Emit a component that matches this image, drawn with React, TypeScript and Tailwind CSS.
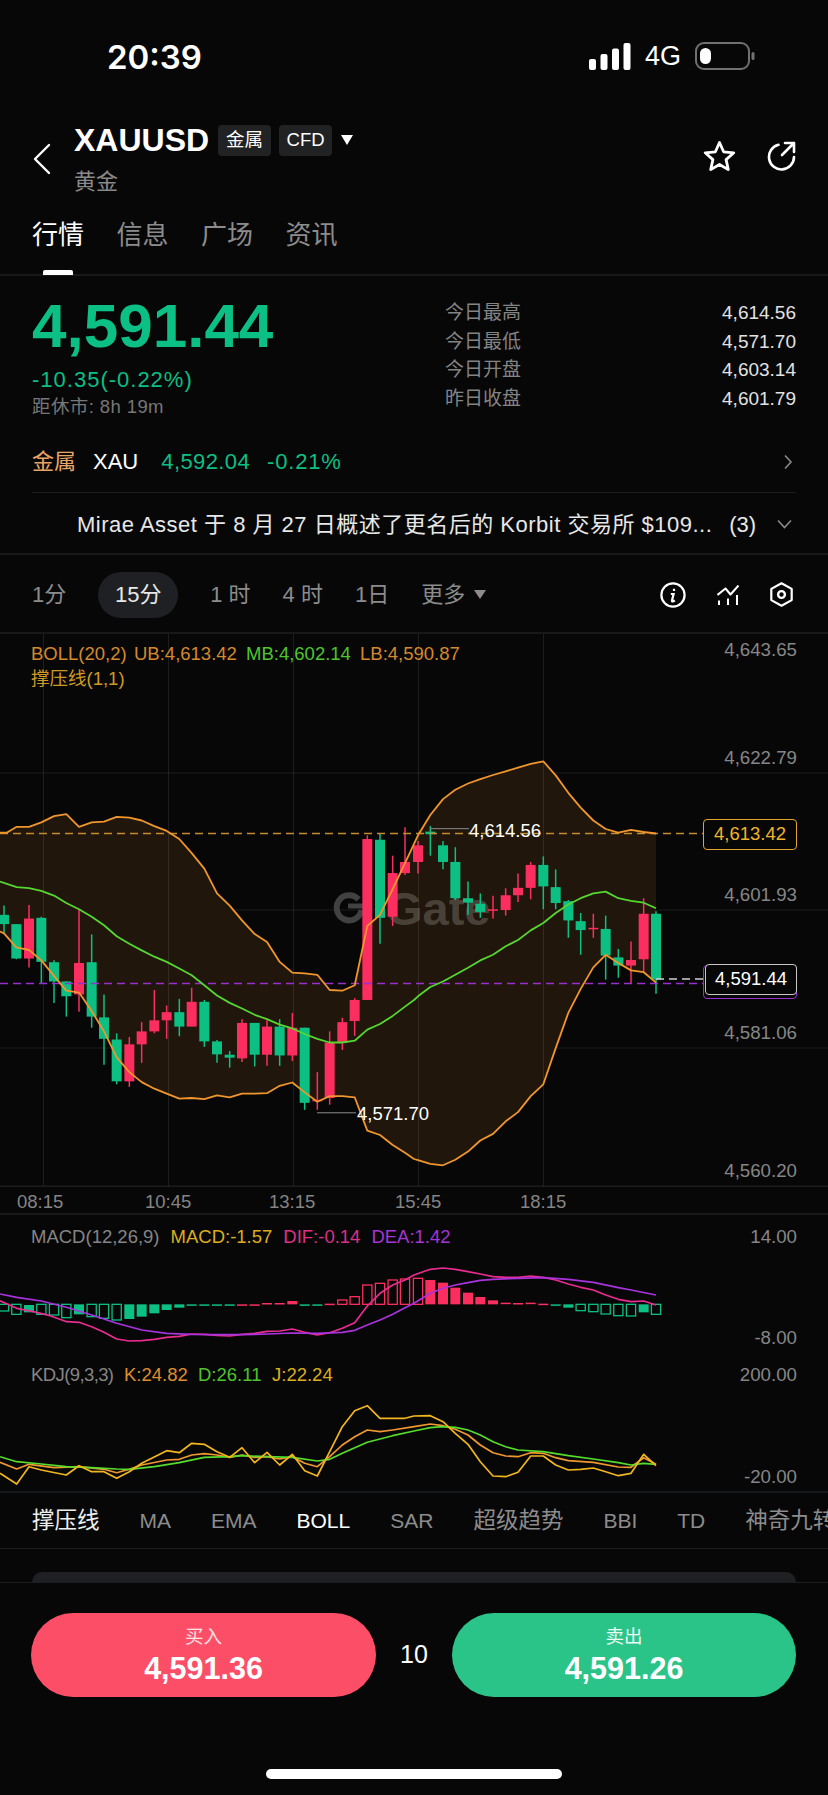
import React from 'react';

type P = [number, number];
// [x, wickTop, bodyTop, bodyBottom, wickBottom, up?]
type Candle = [number, number, number, number, number, number];

const RED = '#fb2e5f';
const GREEN = '#0cc084';
const R = 1242;

const join = (left: P[], right: P[]): P[] => [...left, ...right.map(([x, y]) => [x + R, y] as P)];

const upper = join(
  [[0, 548], [20, 548], [50, 532], [87, 532], [124, 520], [162, 503], [199, 498], [237, 532], [275, 520], [312, 518], [350, 505], [388, 507], [425, 515], [463, 530], [500, 543], [538, 565], [575, 603], [613, 645], [651, 712], [689, 745], [726, 785], [764, 822], [801, 843], [839, 897], [877, 926], [914, 928], [952, 932], [989, 973], [1027, 975], [1064, 960], [1102, 800], [1140, 770], [1178, 700], [1215, 630]],
  [[0, 578], [12, 555], [49, 500], [87, 457], [124, 432], [162, 415], [199, 403], [237, 392], [275, 382], [312, 372], [350, 362], [388, 355], [425, 393], [463, 440], [500, 480], [538, 515], [575, 538], [613, 548], [651, 540], [689, 546], [726, 550]],
);
const middle = join(
  [[0, 680], [50, 695], [87, 698], [124, 705], [162, 718], [199, 738], [237, 755], [275, 775], [312, 798], [350, 828], [388, 848], [425, 866], [463, 883], [500, 897], [538, 915], [575, 933], [613, 960], [651, 988], [689, 1008], [726, 1023], [764, 1040], [801, 1052], [839, 1067], [877, 1077], [914, 1092], [952, 1105], [989, 1115], [1027, 1115], [1064, 1110], [1102, 1080], [1140, 1065], [1178, 1043], [1215, 1018]],
  [[0, 1000], [12, 990], [49, 965], [87, 950], [124, 932], [162, 913], [199, 893], [237, 878], [275, 855], [312, 838], [350, 812], [388, 792], [425, 765], [463, 742], [500, 725], [538, 712], [575, 707], [613, 725], [651, 732], [689, 737], [726, 752]],
);
const lower = join(
  [[0, 815], [12, 820], [49, 858], [87, 865], [124, 893], [162, 935], [199, 975], [237, 980], [275, 1030], [312, 1085], [350, 1155], [388, 1195], [425, 1222], [463, 1240], [500, 1253], [538, 1267], [575, 1265], [613, 1268], [651, 1258], [689, 1263], [726, 1253], [764, 1253], [801, 1252], [839, 1232], [877, 1223], [914, 1250], [952, 1275], [989, 1260], [1027, 1260], [1064, 1263], [1102, 1353], [1140, 1365], [1178, 1392], [1215, 1413]],
  [[0, 1430], [12, 1433], [49, 1443], [87, 1447], [124, 1432], [162, 1410], [199, 1380], [237, 1362], [275, 1328], [312, 1303], [350, 1260], [388, 1228], [425, 1130], [463, 1035], [500, 970], [538, 912], [575, 878], [613, 900], [651, 920], [689, 925], [726, 953]],
);

const candles: Candle[] = [
  [12, 745, 770, 795, 820, 0], [49, 795, 795, 888, 890, 0], [87, 743, 780, 888, 912, 1], [124, 775, 778, 897, 955, 0],
  [162, 893, 898, 950, 1008, 0], [199, 950, 950, 990, 1045, 0], [237, 755, 900, 985, 1032, 1], [275, 823, 898, 1045, 1075, 0],
  [312, 985, 1047, 1105, 1175, 0], [350, 1090, 1107, 1220, 1228, 0], [388, 1100, 1120, 1220, 1235, 1], [425, 1060, 1085, 1120, 1170, 1],
  [463, 973, 1055, 1085, 1090, 1], [500, 1015, 1033, 1055, 1105, 1], [538, 997, 1033, 1072, 1098, 0], [575, 967, 1005, 1072, 1072, 1],
  [613, 1000, 1005, 1112, 1127, 0], [651, 1108, 1112, 1147, 1170, 0], [689, 1138, 1148, 1156, 1183, 0], [726, 1052, 1062, 1158, 1168, 1],
  [764, 1062, 1062, 1148, 1180, 0], [801, 1055, 1072, 1148, 1178, 1], [839, 1052, 1072, 1150, 1178, 0], [877, 1035, 1075, 1150, 1165, 1],
  [914, 1075, 1075, 1278, 1297, 0], [952, 1195, 1270, 1274, 1297, 1], [989, 1085, 1115, 1265, 1283, 1], [1027, 1048, 1060, 1115, 1135, 1],
  [1064, 995, 1000, 1057, 1097, 1], [1102, 555, 565, 1000, 1000, 1], [1140, 550, 567, 778, 848, 0], [1178, 610, 657, 775, 800, 1],
  [1215, 533, 627, 657, 662, 1], [1254, 570, 582, 627, 658, 1], [1291, 530, 545, 552, 610, 0], [1329, 570, 582, 627, 647, 0],
  [1366, 587, 627, 725, 730, 0], [1404, 680, 725, 737, 770, 0], [1441, 712, 740, 762, 778, 0], [1479, 718, 755, 758, 780, 1],
  [1517, 698, 717, 757, 772, 1], [1554, 658, 697, 717, 735, 1], [1592, 627, 635, 697, 728, 1], [1630, 612, 635, 693, 755, 0],
  [1667, 647, 695, 738, 755, 0], [1705, 730, 733, 785, 832, 0], [1742, 765, 787, 811, 878, 0], [1780, 767, 805, 808, 832, 1],
  [1817, 772, 808, 880, 945, 0], [1855, 862, 885, 907, 940, 0], [1893, 842, 892, 907, 955, 1], [1931, 725, 767, 890, 925, 1],
  [1968, 760, 767, 945, 983, 0],
];

// [x, top, bottom, kind] kind: 0 solid green, 1 hollow green, 2 solid red, 3 hollow red
const macdBars: [number, number, number, number][] = [
  [12, 313, 333, 1], [49, 313, 343, 1], [87, 315, 337, 0], [124, 313, 343, 1], [162, 313, 345, 1], [199, 313, 353, 1], [237, 313, 343, 0], [275, 313, 350, 1],
  [312, 313, 355, 1], [350, 313, 360, 1], [388, 313, 357, 0], [425, 313, 350, 0], [463, 313, 340, 0], [500, 313, 330, 0], [538, 313, 323, 0], [575, 313, 317, 0],
  [613, 313, 317, 0], [651, 313, 317, 0], [689, 313, 317, 0], [726, 313, 317, 2], [764, 313, 317, 2], [801, 309, 313, 2], [839, 309, 313, 2], [877, 303, 313, 2],
  [914, 313, 317, 0], [952, 313, 317, 0], [989, 311, 315, 2], [1027, 300, 313, 3], [1064, 290, 313, 3], [1102, 255, 313, 3], [1140, 250, 313, 3], [1178, 240, 313, 3],
  [1215, 237, 313, 3], [1254, 235, 313, 3], [1291, 240, 313, 2], [1329, 248, 313, 2], [1366, 263, 313, 2], [1404, 278, 313, 2], [1441, 291, 313, 2], [1479, 301, 313, 2],
  [1517, 308, 312, 2], [1554, 309, 313, 2], [1592, 308, 312, 2], [1630, 311, 315, 2], [1667, 313, 317, 0], [1705, 313, 323, 0], [1742, 313, 332, 1], [1780, 313, 335, 1],
  [1817, 313, 342, 1], [1855, 313, 347, 1], [1893, 313, 348, 1], [1931, 313, 337, 0], [1968, 313, 343, 1],
];

const dif = join(
  [[0, 302], [50, 325], [100, 335], [150, 347], [200, 365], [237, 367], [275, 380], [312, 397], [350, 417], [388, 423], [425, 422], [463, 418], [500, 412], [538, 409], [575, 402], [613, 403], [651, 406], [689, 408], [726, 403], [764, 400], [801, 394], [839, 393], [877, 387], [914, 397], [952, 405], [989, 398], [1027, 385], [1064, 368], [1102, 318], [1140, 280], [1178, 255], [1215, 240]],
  [[0, 225], [49, 208], [87, 204], [124, 208], [162, 215], [199, 222], [237, 230], [275, 232], [312, 232], [350, 228], [388, 232], [425, 240], [463, 252], [500, 262], [538, 270], [575, 285], [613, 298], [651, 305], [689, 303], [726, 315]],
);
const dea = join(
  [[0, 282], [50, 292], [124, 303], [199, 322], [275, 345], [350, 370], [425, 390], [500, 400], [575, 403], [651, 404], [726, 404], [801, 402], [877, 399], [952, 400], [1027, 397], [1064, 391], [1102, 375], [1140, 360], [1178, 343], [1215, 323]],
  [[0, 310], [49, 280], [87, 265], [124, 255], [162, 248], [199, 241], [237, 238], [312, 235], [388, 233], [463, 238], [538, 247], [613, 263], [651, 270], [726, 285]],
);
const kdjD = join(
  [[0, 770], [50, 785], [124, 792], [199, 800], [275, 803], [350, 807], [388, 808], [463, 800], [538, 788], [613, 772], [689, 770], [726, 767], [801, 770], [877, 772], [952, 783], [989, 778], [1027, 760], [1102, 727], [1178, 707]],
  [[0, 693], [49, 683], [87, 680], [124, 682], [162, 690], [199, 705], [237, 725], [275, 740], [312, 750], [388, 755], [463, 767], [538, 777], [613, 788], [651, 795], [689, 790], [726, 793]],
);
const kdjK = join(
  [[0, 787], [50, 807], [87, 793], [162, 803], [237, 800], [312, 808], [350, 818], [388, 808], [425, 795], [500, 780], [538, 778], [575, 765], [613, 761], [651, 765], [689, 772], [726, 765], [764, 772], [801, 770], [839, 777], [877, 770], [914, 790], [952, 800], [989, 770], [1027, 735], [1064, 710], [1102, 690], [1140, 695], [1178, 690]],
  [[0, 680], [49, 672], [87, 677], [124, 688], [162, 705], [199, 735], [237, 758], [275, 768], [312, 770], [350, 758], [388, 760], [425, 773], [463, 782], [538, 787], [613, 801], [651, 802], [689, 773], [726, 793]],
);
const kdjJ = join(
  [[0, 820], [50, 852], [87, 800], [124, 810], [199, 825], [237, 797], [275, 815], [312, 815], [350, 835], [388, 815], [425, 790], [500, 752], [538, 758], [575, 730], [613, 733], [651, 755], [689, 772], [726, 743], [764, 788], [801, 757], [839, 795], [877, 763], [914, 812], [952, 828], [989, 755], [1027, 680], [1064, 632], [1102, 617], [1140, 655], [1178, 655], [1215, 655]],
  [[0, 648], [49, 647], [87, 665], [124, 700], [162, 733], [199, 785], [237, 828], [275, 830], [312, 817], [350, 768], [388, 768], [425, 795], [463, 810], [500, 808], [538, 804], [575, 815], [613, 827], [651, 820], [689, 763], [726, 797]],
);

// main chart: zoom crop coordinates to panel pixels
const mx = (x: number) => x / 3;
const my = (y: number) => 630 + y / 2.703 - 634;
const mainPts = (p: P[]) => p.map(([x, y]) => `${mx(x).toFixed(1)},${my(y).toFixed(1)}`).join(' ');
// lower panels
const sy = (y: number) => y / 3 - 15;
const subPts = (p: P[]) => p.map(([x, y]) => `${mx(x).toFixed(1)},${sy(y).toFixed(1)}`).join(' ');

const MainChart: React.FC = () => (
  <svg width="828" height="581" className="absolute left-0 top-0">
    {[139, 276, 414, 552].map((y) => <line key={y} x1="0" x2="828" y1={y} y2={y} stroke="#1c1c1c" strokeWidth="1" />)}
    <polygon points={mainPts([...upper, ...[...lower].reverse()])} fill="#20160b" />
    {[43.5, 168.5, 293.5, 418.5, 543.5].map((x) => <line key={x} x1={x} x2={x} y1="0" y2="552" stroke="#ffffff" strokeOpacity="0.09" strokeWidth="1" />)}
    <path d="M358.5 265.5 A12.5 12.5 0 1 0 361.5 276" fill="none" stroke="#414141" strokeWidth="6" />
    <path d="M348 272 H364" fill="none" stroke="#414141" strokeWidth="5" />
    <text x="386" y="291" fontSize="47" fontWeight="700" fill="#ffffff" fillOpacity="0.2" fontFamily="Liberation Sans, sans-serif">Gate</text>
    {candles.map(([x, wt, bt, bb, wb, up]) => {
      const c = up ? RED : GREEN;
      return (
        <g key={x}>
          <line x1={mx(x)} x2={mx(x)} y1={my(wt)} y2={my(wb)} stroke={c} strokeWidth="1.5" />
          <rect x={mx(x) - 5} y={my(bt)} width="10" height={Math.max(my(bb) - my(bt), 1.5)} fill={c} />
        </g>
      );
    })}
    <line x1="0" x2="703" y1="199.5" y2="199.5" stroke="#c88a2e" strokeWidth="1.5" strokeDasharray="8 5" />
    <line x1="0" x2="703" y1="349.5" y2="349.5" stroke="#9a2fd0" strokeWidth="1.5" strokeDasharray="8 5" />
    <line x1="656" x2="705" y1="345" y2="345" stroke="#cfcfcf" strokeWidth="1.5" strokeDasharray="8 5" />
    <line x1="430" x2="469" y1={my(537)} y2={my(537)} stroke="#8a8a8a" strokeWidth="1" />
    <line x1="317" x2="356" y1={my(1305)} y2={my(1305)} stroke="#8a8a8a" strokeWidth="1" />
    <polyline points={mainPts(upper)} fill="none" stroke="#f0962d" strokeWidth="1.8" strokeLinejoin="round" />
    <polyline points={mainPts(lower)} fill="none" stroke="#f0962d" strokeWidth="1.8" strokeLinejoin="round" />
    <polyline points={mainPts(middle)} fill="none" stroke="#56d62f" strokeWidth="1.8" strokeLinejoin="round" />
  </svg>
);

const SubCharts: React.FC = () => (
  <svg width="828" height="278" className="absolute left-0 top-0">
    {macdBars.map(([x, t, b, kind]) => {
      const c = kind < 2 ? '#0cc084' : '#fb2e5f';
      const hollow = kind === 1 || kind === 3;
      const thin = b - t < 6;
      return hollow ? (
        <rect key={x} x={mx(x) - 4.6} y={sy(t)} width="9.2" height={(b - t) / 3} fill="none" stroke={c} strokeWidth="1.3" />
      ) : (
        <rect key={x} x={mx(x) - 5} y={sy(t)} width="10" height={thin ? 1.5 : (b - t) / 3} fill={c} />
      );
    })}
    <polyline points={subPts(dif)} fill="none" stroke="#e92c90" strokeWidth="1.7" strokeLinejoin="round" />
    <polyline points={subPts(dea)} fill="none" stroke="#a933dd" strokeWidth="1.7" strokeLinejoin="round" />
    <polyline points={subPts(kdjK)} fill="none" stroke="#f0982f" strokeWidth="1.7" strokeLinejoin="round" />
    <polyline points={subPts(kdjD)} fill="none" stroke="#55dc2c" strokeWidth="1.7" strokeLinejoin="round" />
    <polyline points={subPts(kdjJ)} fill="none" stroke="#f2b51e" strokeWidth="1.7" strokeLinejoin="round" />
  </svg>
);

const StatRow: React.FC<{ label: string; value: string }> = ({ label, value }) => (
  <div className="flex h-[28.7px] items-center justify-between">
    <span className="text-[19px] text-[#848484]">{label}</span>
    <span className="text-[19px] text-[#e2e2e2]">{value}</span>
  </div>
);

const AxisLabel: React.FC<{ top: number; children: React.ReactNode }> = ({ top, children }) => (
  <div className="absolute right-[31px] -translate-y-1/2 text-[18.7px] leading-none text-[#868686]" style={{ top }}>
    {children}
  </div>
);

const indicators = ['MA', 'EMA', 'BOLL', 'SAR', '超级趋势', 'BBI', 'TD', '神奇九转'];

export default function App() {
  return (
    <div className="relative flex h-[1795px] w-[828px] flex-col overflow-hidden bg-[#070708] text-white [font-family:'Liberation_Sans','Noto_Sans_CJK_SC',sans-serif]">
      {/* status bar */}
      <div className="flex h-[114px] shrink-0 items-start justify-between pl-[107px] pr-[73px] pt-[38px]">
        <span className="text-[33px] font-semibold leading-[38px] [font-family:Inter,sans-serif]">20:39</span>
        <div className="flex items-center gap-[14px] pt-[4px]">
          <svg width="42" height="27" viewBox="0 0 42 27" fill="#fff">
            <rect x="0" y="16" width="7" height="11" rx="2" />
            <rect x="11.5" y="11" width="7" height="16" rx="2" />
            <rect x="23" y="5.5" width="7" height="21.5" rx="2" />
            <rect x="34.5" y="0" width="7" height="27" rx="2" />
          </svg>
          <span className="text-[27px] leading-none">4G</span>
          <svg width="60" height="28" viewBox="0 0 60 28">
            <rect x="1" y="1" width="53" height="26" rx="8" fill="none" stroke="#707070" strokeWidth="2" />
            <rect x="5" y="6" width="11" height="16" rx="5.5" fill="#fff" />
            <rect x="56.5" y="10" width="3" height="8" rx="1.5" fill="#707070" />
          </svg>
        </div>
      </div>

      {/* symbol header */}
      <div className="flex h-[78px] shrink-0 items-start justify-between pl-[32px] pr-[32px] pt-[6px]">
        <div className="flex">
          <svg width="20" height="32" viewBox="0 0 20 32" className="mt-[23px]" fill="none" stroke="#fff" strokeWidth="2.4" strokeLinecap="round" strokeLinejoin="round">
            <path d="M17 2 L3 16 L17 30" />
          </svg>
          <div className="ml-[22px]">
            <div className="flex items-center">
              <span className="text-[32px] font-bold leading-[40px]">XAUUSD</span>
              <span className="ml-[9px] flex h-[31px] w-[53px] items-center justify-center rounded-[4px] bg-[#212224] text-[18.5px]">金属</span>
              <span className="ml-[8px] flex h-[31px] w-[53px] items-center justify-center rounded-[4px] bg-[#212224] text-[18.5px]">CFD</span>
              <span className="ml-[9px] h-0 w-0 border-x-[6.5px] border-t-[10px] border-x-transparent border-t-white" />
            </div>
            <div className="mt-[9px] text-[22px] leading-[26px] text-[#8a8a8a]">黄金</div>
          </div>
        </div>
        <div className="mt-[20px] flex items-center gap-[31px]">
          <svg width="33" height="32" viewBox="0 0 33 32" fill="none" stroke="#fff" strokeWidth="2.8" strokeLinejoin="round">
            <path d="M16.5 2.5 L20.6 11.8 L30.8 12.8 L23.1 19.6 L25.3 29.6 L16.5 24.5 L7.7 29.6 L9.9 19.6 L2.2 12.8 L12.4 11.8 Z" />
          </svg>
          <svg width="29" height="30" viewBox="0 0 29 30" fill="none" stroke="#fff" strokeWidth="2.6" strokeLinecap="round" strokeLinejoin="round">
            <path d="M27 16 A12.5 12.5 0 1 1 11.5 3.8" />
            <path d="M15 14 L27 2 M18 2 H27 V11" />
          </svg>
        </div>
      </div>

      {/* tabs */}
      <div className="relative flex h-[84px] shrink-0 items-start gap-[32.5px] border-b-2 border-[#17181a] pl-[32px] pt-[28px]">
        {['行情', '信息', '广场', '资讯'].map((t, i) => (
          <span key={t} className={`text-[26px] leading-[30px] ${i === 0 ? 'text-white' : 'text-[#8c8c8c]'}`}>{t}</span>
        ))}
        <div className="absolute bottom-[-1px] left-[43px] h-[5px] w-[30px] rounded-t-[2px] bg-white" />
      </div>

      {/* price & stats */}
      <div className="flex h-[155px] shrink-0 justify-between pl-[32px] pr-[32px]">
        <div>
          <div className="mt-[15px] text-[62px] font-bold leading-[70px] text-[#0bbf85]">4,591.44</div>
          <div className="mt-[6px] text-[22px] leading-[26px] tracking-[1px] text-[#0bbf85]">-10.35(-0.22%)</div>
          <div className="mt-[2px] text-[18.5px] leading-[24px] tracking-[0.4px] text-[#777]">距休市: 8h 19m</div>
        </div>
        <div className="w-[351px] pt-[23px]">
          <StatRow label="今日最高" value="4,614.56" />
          <StatRow label="今日最低" value="4,571.70" />
          <StatRow label="今日开盘" value="4,603.14" />
          <StatRow label="昨日收盘" value="4,601.79" />
        </div>
      </div>

      {/* metal row */}
      <div className="mx-[32px] flex h-[62px] shrink-0 items-center border-b border-[#1d1e20] text-[22px]">
        <span className="text-[#eaa566]">金属</span>
        <span className="ml-[17px]">XAU</span>
        <span className="ml-[23px] tracking-[0.4px] text-[#0bbf85]">4,592.04</span>
        <span className="ml-[17px] tracking-[0.8px] text-[#0bbf85]">-0.21%</span>
        <svg width="10" height="16" viewBox="0 0 10 16" className="ml-auto mr-[3px]" fill="none" stroke="#8a8a8a" strokeWidth="1.6">
          <path d="M2 1.5 L8 8 L2 14.5" />
        </svg>
      </div>

      {/* news */}
      <div className="flex h-[62px] shrink-0 items-center border-b-2 border-[#17181a] pl-[77px] pr-[36px] pt-[2px] text-[22px] text-[#e8e8e8]">
        <span className="whitespace-nowrap tracking-[0.5px]">Mirae Asset 于 8 月 27 日概述了更名后的 Korbit 交易所 $109...</span>
        <span className="ml-[17px] whitespace-nowrap">(3)</span>
        <svg width="15" height="10" viewBox="0 0 15 10" className="ml-auto" fill="none" stroke="#8a8a8a" strokeWidth="1.6">
          <path d="M1 1.5 L7.5 8.5 L14 1.5" />
        </svg>
      </div>

      {/* timeframes */}
      <div className="flex h-[79px] shrink-0 items-center border-b-2 border-[#17181a] pl-[32px] pr-[35px] pt-[2px] text-[22px] text-[#8c8c8c]">
        <span>1分</span>
        <span className="ml-[32px] flex h-[46px] w-[80px] items-center justify-center rounded-full bg-[#1f2023] text-[#e8e8e8]">15分</span>
        <span className="ml-[32px]">1 时</span>
        <span className="ml-[32px]">4 时</span>
        <span className="ml-[32px]">1日</span>
        <span className="ml-[32px]">更多</span>
        <span className="ml-[9px] h-0 w-0 border-x-[6px] border-t-[9px] border-x-transparent border-t-[#8c8c8c]" />
        <div className="ml-auto flex items-center gap-[31px]">
          <svg width="26" height="26" viewBox="0 0 26 26" fill="none" stroke="#fff" strokeWidth="2.2">
            <circle cx="13" cy="13" r="11.6" />
            <path d="M10.8 12 H13.6 L12 18.6 C11.8 19.6 13 19.8 14.8 18.4 M14 6.8 v2.2" strokeWidth="2.2" />
          </svg>
          <svg width="22" height="20" viewBox="0 0 22 20" fill="none" stroke="#fff" strokeWidth="2">
            <path d="M0.5 10 L8.5 3.5 L13.5 9.5 L21.5 0.5" strokeLinejoin="round" />
            <path d="M2 15.5 V20 M11 13.5 V20 M20 10 V20" />
          </svg>
          <svg width="23" height="25" viewBox="0 0 23 25" fill="none" stroke="#fff" strokeWidth="2.2" strokeLinejoin="round">
            <path d="M11.5 1.3 L21.7 6.9 V18.1 L11.5 23.7 L1.3 18.1 V6.9 Z" />
            <circle cx="11.5" cy="12.5" r="3.4" strokeWidth="2.4" />
          </svg>
        </div>
      </div>

      {/* main chart */}
      <div className="relative h-[581px] shrink-0 border-b-2 border-[#17181a] text-[18.5px] leading-none">
        <MainChart />
        <div className="absolute left-0 right-0 top-[552px] border-t border-[#1c1c1c]" />
        <div className="absolute left-[31px] top-[11px] flex whitespace-nowrap">
          <span className="w-[103px] text-[#d4892c]">BOLL(20,2)</span>
          <span className="w-[112px] text-[#d4892c]">UB:4,613.42</span>
          <span className="w-[114px] text-[#4fc42c]">MB:4,602.14</span>
          <span className="text-[#d4892c]">LB:4,590.87</span>
        </div>
        <div className="absolute left-[31px] top-[36px] text-[#cf9a22]">撑压线(1,1)</div>
        <AxisLabel top={16}>4,643.65</AxisLabel>
        <AxisLabel top={124}>4,622.79</AxisLabel>
        <AxisLabel top={261}>4,601.93</AxisLabel>
        <AxisLabel top={399}>4,581.06</AxisLabel>
        <AxisLabel top={537}>4,560.20</AxisLabel>
        <div className="absolute left-[469px] top-[188px] text-white">4,614.56</div>
        <div className="absolute left-[357px] top-[471px] text-white">4,571.70</div>
        <div className="absolute left-[703px] top-[185px] flex h-[31px] w-[94px] items-center justify-center rounded-[4px] border border-[#e0a52a] bg-[#070708] text-[#f0b429]">4,613.42</div>
        <div className="absolute left-[703px] top-[331px] h-[34px] w-[94px] rounded-[4px] border border-[#9a2fd0] bg-[#070708]" />
        <div className="absolute left-[705px] top-[330px] flex h-[31px] w-[92px] items-center justify-center rounded-[4px] border border-[#c8c8c8] bg-[#070708] text-white">4,591.44</div>
        <div className="absolute left-[0px] top-[559px] w-[828px] text-[#858585]">
          <span className="absolute left-[17px]">08:15</span>
          <span className="absolute left-[145px]">10:45</span>
          <span className="absolute left-[269px]">13:15</span>
          <span className="absolute left-[395px]">15:45</span>
          <span className="absolute left-[520px]">18:15</span>
        </div>
      </div>

      {/* macd + kdj */}
      <div className="relative h-[278px] shrink-0 border-b-2 border-[#17181a] text-[18.5px] leading-none">
        <SubCharts />
        <div className="absolute left-[31px] top-[13px] flex gap-[11px] whitespace-nowrap">
          <span className="text-[#858585]">MACD(12,26,9)</span>
          <span className="text-[#dcae1e]">MACD:-1.57</span>
          <span className="text-[#de2f87]">DIF:-0.14</span>
          <span className="text-[#a633d6]">DEA:1.42</span>
        </div>
        <div className="absolute left-[31px] top-[151px] flex whitespace-nowrap">
          <span className="w-[93px] tracking-[-0.6px] text-[#858585]">KDJ(9,3,3)</span>
          <span className="w-[74px] text-[#df8e2e]">K:24.82</span>
          <span className="w-[74px] text-[#4fc42c]">D:26.11</span>
          <span className="text-[#dcae1e]">J:22.24</span>
        </div>
        <AxisLabel top={22}>14.00</AxisLabel>
        <AxisLabel top={123}>-8.00</AxisLabel>
        <AxisLabel top={160}>200.00</AxisLabel>
        <AxisLabel top={262}>-20.00</AxisLabel>
      </div>

      {/* indicator tabs */}
      <div className="flex h-[56px] shrink-0 items-center gap-[40px] overflow-hidden whitespace-nowrap border-b border-[#1d1e20] pl-[32px] text-[21px] text-[#8c8c8c]">
        <span className="text-[22.5px] text-[#eee]">撑压线</span>
        {indicators.map((t) => (
          <span key={t} className={t === 'BOLL' ? 'text-white' : /^[A-Z]/.test(t) ? '' : 'text-[22.5px]'}>{t}</span>
        ))}
      </div>

      {/* card peeking out under the trade bar */}
      <div className="flex h-[34px] shrink-0 items-end border-b border-[#1d1e20] px-[32px]">
        <div className="h-[10px] w-full rounded-t-[12px] bg-[#1f2023]" />
      </div>

      {/* trade bar */}
      <div className="flex shrink-0 items-center pl-[31px] pr-[32px] pt-[30px]">
        <div className="flex h-[84px] w-[345px] flex-col items-center justify-center rounded-full bg-[#fc4f67]">
          <span className="text-[18.5px] leading-[24px] text-white/85">买入</span>
          <span className="mt-[1px] text-[30.5px] font-bold leading-[36px]">4,591.36</span>
        </div>
        <span className="w-[76px] text-center text-[25px]">10</span>
        <div className="flex h-[84px] w-[344px] flex-col items-center justify-center rounded-full bg-[#2bc488]">
          <span className="text-[18.5px] leading-[24px] text-white/90">卖出</span>
          <span className="mt-[1px] text-[30.5px] font-bold leading-[36px]">4,591.26</span>
        </div>
      </div>

      {/* home indicator */}
      <div className="absolute bottom-[16px] left-[266px] h-[10px] w-[296px] rounded-full bg-white" />
    </div>
  );
}
